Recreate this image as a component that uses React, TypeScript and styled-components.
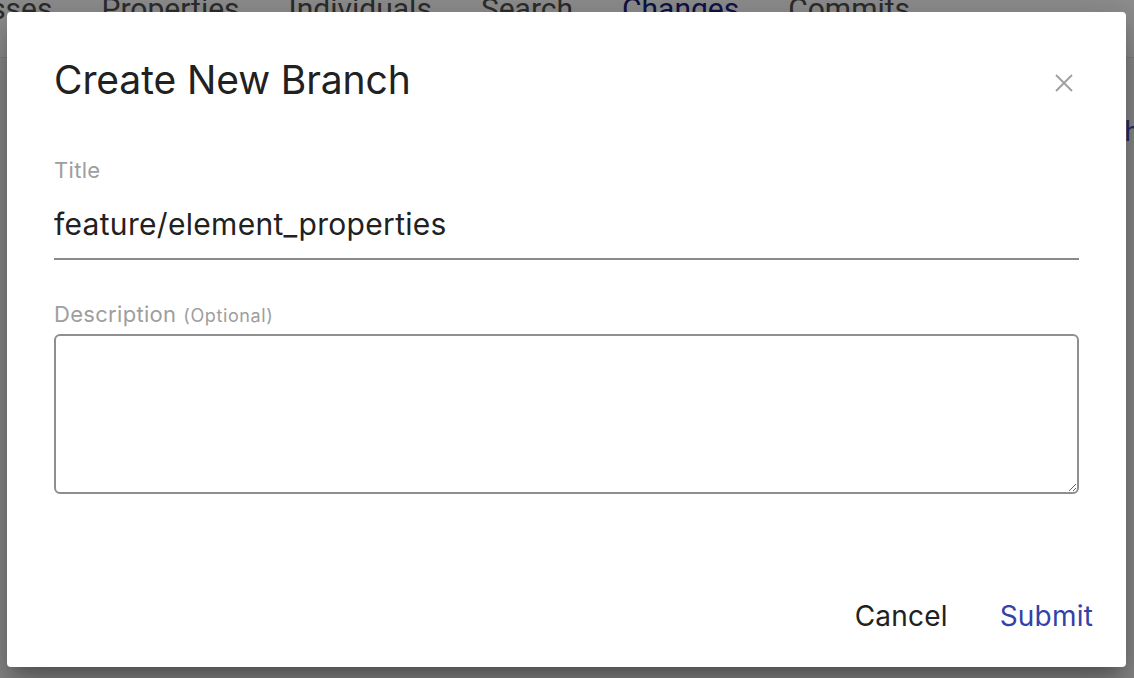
import React from "react";
import styled, { createGlobalStyle } from "styled-components";

const Global = createGlobalStyle`
  html, body { margin: 0; padding: 0; }
  body { width: 1134px; height: 678px; overflow: hidden; background: #fff; }
  #root { width: 1134px; height: 678px; position: relative; }
`;

const Page = styled.div`
  width: 1134px;
  height: 678px;
  position: relative;
  overflow: hidden;
  font-family: Roboto, "Liberation Sans", sans-serif;
  background: #f7f7f7;
`;

const TabBar = styled.div`
  display: flex;
  gap: 49px;
  height: 58px;
  box-sizing: border-box;
  border-bottom: 1px solid #e4e4e4;
  margin-left: -53px;
  align-items: flex-start;
  background: #fff;
`;

const Tab = styled.div<{ $active?: boolean }>`
  font-size: 30px;
  line-height: 30px;
  margin-top: -6px;
  color: ${(p) => (p.$active ? "#1a237e" : "#505050")};
`;

const PeekRow = styled.div`
  display: flex;
  justify-content: flex-end;
  padding: 57px 0 0 0;
`;

const PeekLink = styled.span`
  color: #3f51b5;
  font-size: 28px;
  margin-right: -6px;
`;

const Overlay = styled.div`
  position: absolute;
  inset: 0;
  background: rgba(0, 0, 0, 0.44);
`;

const Dialog = styled.div`
  position: absolute;
  left: 7px;
  top: 12px;
  width: 1119px;
  height: 655px;
  box-sizing: border-box;
  background: #fff;
  border-radius: 4px;
  box-shadow: 0 11px 15px -7px rgba(0, 0, 0, 0.25), 0 24px 38px 3px rgba(0, 0, 0, 0.16),
    0 9px 46px 8px rgba(0, 0, 0, 0.14);
  padding: 42px 47px 0 47px;
  display: flex;
  flex-direction: column;
  font-family: Inter, "Liberation Sans", sans-serif;
`;

const Header = styled.div`
  display: flex;
  justify-content: space-between;
  align-items: center;
`;

const Heading = styled.h2`
  margin: 0;
  font-size: 39px;
  font-weight: 400;
  color: #212121;
  line-height: 52px;
  letter-spacing: -0.1px;
`;

const CloseBtn = styled.button`
  border: none;
  background: none;
  padding: 0;
  margin: 6px 4px 0 0;
  width: 22px;
  height: 22px;
  display: flex;
  align-items: center;
  justify-content: center;
  cursor: pointer;
`;

const Label = styled.div`
  font-size: 22px;
  letter-spacing: 0.3px;
  color: #9e9e9e;
  line-height: 26px;
  display: flex;
  align-items: baseline;
  gap: 7px;
`;

const Small = styled.span`
  font-size: 18px;
  letter-spacing: 0.6px;
`;

const TitleField = styled.div`
  margin-top: 51px;
  display: flex;
  flex-direction: column;
`;

const TitleInput = styled.input`
  font-family: Inter, "Liberation Sans", sans-serif;
  border: none;
  border-bottom: 2px solid #8a8a8a;
  outline: none;
  font-size: 30px;
  letter-spacing: 0.3px;
  color: #212121;
  padding: 0 0 6px 0;
  margin-top: 13px;
  height: 64px;
  box-sizing: border-box;
  background: transparent;
`;

const DescField = styled.div`
  margin-top: 41px;
  display: flex;
  flex-direction: column;
`;

const TextArea = styled.textarea`
  margin-top: 5px;
  height: 160px;
  box-sizing: border-box;
  border: 2px solid #8f8f8f;
  border-radius: 6px;
  resize: vertical;
  outline: none;
  font-family: Inter, "Liberation Sans", sans-serif;
  font-size: 18px;
`;

const Actions = styled.div`
  margin-top: auto;
  display: flex;
  justify-content: flex-end;
  gap: 52px;
  margin-right: -14px;
  margin-bottom: 34px;
`;

const ActionBtn = styled.button<{ $primary?: boolean }>`
  border: none;
  background: none;
  padding: 0;
  font-family: Inter, "Liberation Sans", sans-serif;
  font-size: 28px;
  letter-spacing: 0.2px;
  line-height: 34px;
  color: ${(p) => (p.$primary ? "#3242a8" : "#212121")};
  cursor: pointer;
`;

export default function App() {
  return (
    <>
      <Global />
      <Page>
        <TabBar>
          <Tab>Classes</Tab>
          <Tab>Properties</Tab>
          <Tab>Individuals</Tab>
          <Tab>Search</Tab>
          <Tab $active>Changes</Tab>
          <Tab>Commits</Tab>
        </TabBar>
        <PeekRow>
          <PeekLink>h</PeekLink>
        </PeekRow>
        <Overlay />
        <Dialog role="dialog">
          <Header>
            <Heading>Create New Branch</Heading>
            <CloseBtn aria-label="close">
              <svg width="18" height="18" viewBox="0 0 18 18">
                <path d="M1 1 L17 17 M17 1 L1 17" stroke="#9e9e9e" strokeWidth="1.8" fill="none" />
              </svg>
            </CloseBtn>
          </Header>
          <TitleField>
            <Label>Title</Label>
            <TitleInput defaultValue="feature/element_properties" />
          </TitleField>
          <DescField>
            <Label>
              Description <Small>(Optional)</Small>
            </Label>
            <TextArea />
          </DescField>
          <Actions>
            <ActionBtn>Cancel</ActionBtn>
            <ActionBtn $primary>Submit</ActionBtn>
          </Actions>
        </Dialog>
      </Page>
    </>
  );
}
